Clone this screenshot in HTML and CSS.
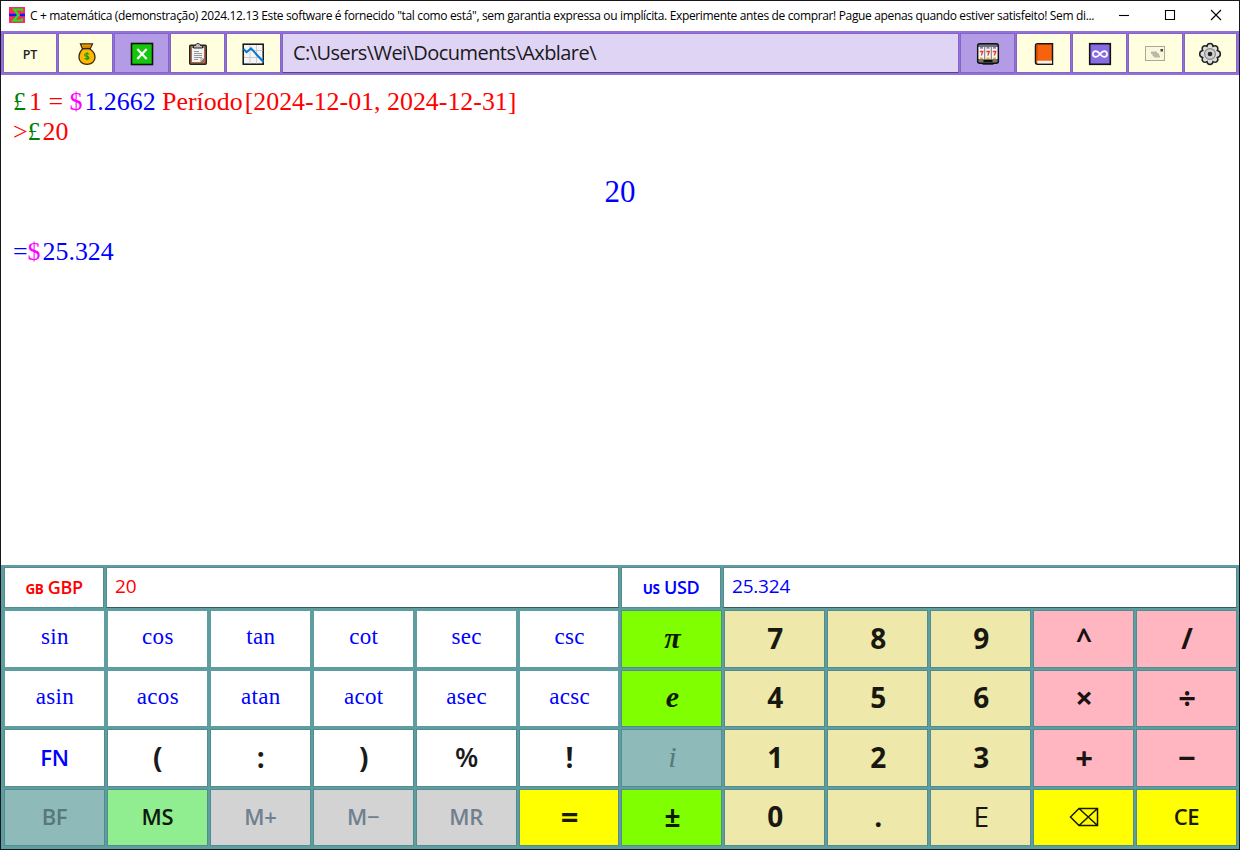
FILE: index.html
```html
<!DOCTYPE html>
<html lang="pt">
<head>
<meta charset="utf-8">
<title>C + matemática</title>
<link rel="stylesheet" href="styles.css">
</head>
<body>
<div class="window">
  <header class="titlebar">
    <svg class="logo" width="16" height="16" viewBox="0 0 16 16"><rect width="16" height="16" fill="#ff2860"/><path d="M0 6.800h6l3 1.200-3 1.200H0zM11 6.800h5v2.400h-5z" fill="#1414ff"/><path d="M13.200 4.500V2.500H5l4.500 5.500-5 5.500h8.500V11.500" fill="none" stroke="#14f014" stroke-width="2"/></svg>
    <span class="title">C + matemática (demonstração) 2024.12.13 Este software é fornecido "tal como está", sem garantia expressa ou implícita. Experimente antes de comprar! Pague apenas quando estiver satisfeito! Sem di...</span>
    <div class="controls">
      <svg width="12" height="12" viewBox="0 0 12 12"><path d="M1 6.500h10" /></svg>
      <svg width="12" height="12" viewBox="0 0 12 12"><path d="M1.500 1.500h9v9h-9z" /></svg>
      <svg width="12" height="12" viewBox="0 0 12 12"><path d="M1 1l10 10M11 1L1 11" /></svg>
    </div>
  </header>
  <nav class="toolbar">
    <button class="tool lang">PT</button>
    <button class="tool"><svg width="24" height="24" viewBox="0 0 24 24"><path d="M8.500 7L6.500 1.800h12L16 7c3 2 5 5 5 8.500 0 4-3.500 6.800-8 6.800s-8-2.800-8-6.800C5 12 6.500 9 8.500 7z" fill="#fdb900" stroke="#3a2b10" stroke-width="1.300"/><path d="M8 3.500h9L15.500 6h-6z" fill="#d88300"/><path d="M8.500 6.700h8" stroke="#222" stroke-width="1.300"/><path d="M15 12.300c-1.300-1.300-4.300-1-4.300.6 0 1.900 4.300.9 4.300 2.800 0 1.700-3 1.900-4.400.5M13 10.200v8" fill="none" stroke="#0d9d18" stroke-width="1.200"/></svg></button>
    <button class="tool active"><svg width="24" height="24" viewBox="0 0 24 24"><rect x="1.500" y="1.500" width="21" height="21" fill="#16c60c" stroke="#111" stroke-width="1.600"/><path d="M7.300 7l9.400 10M16.700 7L7.300 17" stroke="#fff" stroke-width="2.200"/></svg></button>
    <button class="tool"><svg width="24" height="24" viewBox="0 0 24 24"><rect x="3.700" y="3.200" width="16.600" height="19" rx="1" fill="#a46b4c" stroke="#222" stroke-width="1.400"/><path d="M6 6h12v10l-4 4H6z" fill="#f3f3f3"/><path d="M18 16l-4 4v-4z" fill="#c7c7c7"/><path d="M7.500 6V3.500h2C10 .8 14 .8 14.500 3.500h2V6z" fill="#bcbcbc" stroke="#222"/><path d="M8 9.500h5M8 11.500h8M8 13.500h8M8 15.500h8M8 17.500h4" stroke="#999"/></svg></button>
    <button class="tool"><svg width="24" height="24" viewBox="0 0 24 24"><rect x="1.200" y="2.200" width="20" height="20" fill="#f5f5f5" stroke="#111" stroke-width="1.500"/><path d="M2 8.500h18.500M2 15.500h18.500M8 3v18.500M14.500 3v18.500" stroke="#ccc"/><path d="M1.500 6.800l3 3.400L9 6.400 21.500 20" fill="none" stroke="#0078d7" stroke-width="2"/></svg></button>
    <div class="path">C:\Users\Wei\Documents\Axblare\</div>
    <button class="tool active"><svg width="24" height="24" viewBox="0 0 24 24"><path d="M6.500 19h11v3.700h-11z" fill="#111"/><rect x="1.700" y="1.700" width="20.600" height="19.600" rx="2" fill="#727272" stroke="#111" stroke-width="1.500"/><rect x="2.500" y="5" width="19" height="12" fill="#f5f5f5"/><path d="M8.700 5v12M15.300 5v12" stroke="#555" stroke-width=".8"/><path d="M4 5.800h3M10.500 5.800h3M17 5.800h3" stroke="#6050d0" stroke-width="1.300"/><path d="M4 16.300h3M10.500 16.300h3M17 16.300h3" stroke="#f2b400" stroke-width="1.500"/><path d="M3.800 9.500h3l-1.500 4M10.300 9.500h3l-1.500 4M16.800 9.500h3l-1.500 4" fill="none" stroke="#e8352a" stroke-width="1.300"/><path d="M7.500 18h9v2h-9z" fill="#111"/></svg></button>
    <button class="tool"><svg width="24" height="24" viewBox="0 0 24 24"><path d="M5.500 1.700h15v20.600h-15q-2 0-2-2V3.700q0-2 2-2z" fill="#f7630c" stroke="#181818" stroke-width="1.500"/><path d="M5 2.500v17" stroke="#c64a00" stroke-width="1.400"/><path d="M5 18.800h15v2.600H5.500z" fill="#f5f5f5"/></svg></button>
    <button class="tool"><svg width="24" height="24" viewBox="0 0 24 24"><rect x="1.700" y="1.700" width="20.600" height="20.600" fill="#886ce4" stroke="#111" stroke-width="1.600"/><path d="M12 12c-1.600-2-2.800-2.900-4.200-2.900a2.900 2.900 0 0 0 0 5.800C9.200 14.900 10.400 14 12 12s2.800-2.900 4.200-2.900a2.900 2.900 0 0 1 0 5.800C14.800 14.900 13.600 14 12 12z" fill="none" stroke="#fff" stroke-width="1.700"/></svg></button>
    <button class="tool"><svg width="24" height="24" viewBox="0 0 24 24"><rect x="1.500" y="4.500" width="19" height="14" fill="#f8f8dd" stroke="#aaa998"/><rect x="16.500" y="7" width="2.500" height="2.500" fill="#444"/><path d="M7 9.500h6v1.700h2v2.300h1v2h-6v-1.300H8.500V12H7z" fill="#b9b9a5"/></svg></button>
    <button class="tool last"><svg width="24" height="24" viewBox="0 0 24 24"><path d="M9 4.300q.3-2.800 3-2.800t3 2.800q2.400-1.400 4 .2t.3 4q3 .5 3 3.500t-3 3.500q1.300 2.400-.3 4t-4 .2q-.3 2.800-3 2.800t-3-2.800q-2.400 1.400-4-.2t-.3-4q-3-.5-3-3.500t3-3.500q-1.300-2.400.3-4t4-.2z" fill="#ddd" stroke="#222" stroke-width="1.500"/><circle cx="12" cy="12" r="5.400" fill="#cfcfcf" stroke="#888" stroke-width="1.200"/><circle cx="12" cy="12" r="2.300" fill="#222"/></svg></button>
  </nav>
  <main class="output">
    <p><span class="gbp">£</span><span class="one">1</span> = <span class="usd">$</span><span class="blue">1.2662</span> Período<span class="range">[2024-12-01, 2024-12-31]</span></p>
    <p>&gt;<span class="gbp">£</span>20</p>
    <p class="math">20</p>
    <p class="blue">=<span class="usd">$</span>25.324</p>
  </main>
  <section class="keypad">
    <div class="converter">
      <button class="currency red"><small>GB</small> GBP</button>
      <div class="amount red">20</div>
      <button class="currency blue"><small>US</small> USD</button>
      <div class="amount blue">25.324</div>
    </div>
    <div class="keys">
      <button class="key fn">sin</button><button class="key fn">cos</button><button class="key fn">tan</button><button class="key fn">cot</button><button class="key fn">sec</button><button class="key fn">csc</button><button class="key lime const"><span>π</span></button><button class="key num">7</button><button class="key num">8</button><button class="key num">9</button><button class="key op">^</button><button class="key op">/</button>
      <button class="key fn">asin</button><button class="key fn">acos</button><button class="key fn">atan</button><button class="key fn">acot</button><button class="key fn">asec</button><button class="key fn">acsc</button><button class="key lime const"><span>e</span></button><button class="key num">4</button><button class="key num">5</button><button class="key num">6</button><button class="key op sign">×</button><button class="key op sign">÷</button>
      <button class="key word blue">FN</button><button class="key">(</button><button class="key">:</button><button class="key">)</button><button class="key percent">%</button><button class="key">!</button><button class="key off const thin"><span>i</span></button><button class="key num">1</button><button class="key num">2</button><button class="key num">3</button><button class="key op sign">+</button><button class="key op sign">−</button>
      <button class="key word off">BF</button><button class="key word store">MS</button><button class="key word mem">M+</button><button class="key word mem">M−</button><button class="key word mem">MR</button><button class="key yellow sign">=</button><button class="key lime">±</button><button class="key num">0</button><button class="key num">.</button><button class="key num exp">E</button><button class="key yellow back"><svg width="30" height="20" viewBox="0 0 30 20"><path d="M1.500 10L10 1.500h18.500v17H10zM10 1.500l18.500 17M28.500 1.500L10 18.500" fill="none" stroke="#1a1a00" stroke-width="1.500"/></svg></button><button class="key word yellow">CE</button>
    </div>
  </section>
</div>
</body>
</html>
```
FILE: styles.css
```css
* { box-sizing: border-box; }
body { margin: 0; font-family: "Open Sans", "Noto Sans", sans-serif; }
button { margin: 0; padding: 0; font: inherit; color: inherit; border-radius: 0; }
p { margin: 0; }
.window { width: 1240px; height: 850px; border: 1px solid #18161a; background: #fff; display: flex; flex-direction: column; overflow: hidden; }
.titlebar { height: 30px; flex: none; display: flex; align-items: center; padding: 0 17px 2px 8px; }
.logo { flex: none; margin-right: 5px; }
.title { font-size: 12px; white-space: nowrap; letter-spacing: -0.35px; width: 1070px; color: #000; }
.controls { margin-left: auto; display: flex; gap: 34px; }
.controls svg { fill: none; stroke: #000; stroke-width: 1.1; }
.toolbar { height: 44px; flex: none; background: #9370db; padding: 2px 2px 1px 2px; display: flex; gap: 1px; }
.tool { width: 55px; height: 40px; flex: none; background: #ffffe0; border: 1px solid #8465c5; display: flex; align-items: center; justify-content: center; color: #222; padding-top: 1px; }
.tool.lang { width: 54px; font-size: 12.5px; font-weight: 600; padding-top: 3px; }
.tool.last { width: 53px; padding-right: 1px; }
.tool.active { background: #b39be5; }
.path { flex: 1; height: 40px; background: #dfd4f4; border: 1px solid #8465c5; border-bottom-color: #584383; padding-left: 10px; font-size: 20px; line-height: 38px; letter-spacing: -0.56px; color: #1b1920; white-space: nowrap; }
.output { flex: 1; padding: 12px; font-family: "Liberation Serif", serif; font-size: 25.900px; line-height: 30px; color: #f00; white-space: nowrap; }
.gbp { color: #008000; margin-right: 2px; }
.one { margin-left: 1px; }
.usd { color: #f0f; margin-right: 2px; }
.blue { color: #00f; }
.red { color: #f00; }
.range { margin-left: 2px; }
.math { height: 90px; line-height: 89px; font-size: 31px; text-align: center; color: #00f; }
.keypad { height: 284px; flex: none; background: #5f9ea0; padding: 2px 2px 3px 3px; }
.converter { display: grid; grid-template-columns: 100px 513px 100px 1fr; gap: 2px; height: 41px; margin-bottom: 2px; }
.currency { background: #fff; border: 1px solid #528c8e; font-size: 18px; font-weight: 600; letter-spacing: -0.4px; padding-bottom: 1px; }
.currency small { font-size: 13.500px; font-weight: 700; }
.amount { background: #fff; border: 1px solid #528c8e; border-bottom-color: #355b5d; padding-left: 8px; font-size: 19px; line-height: 37px; letter-spacing: -0.2px; }
.keys { display: grid; grid-template-columns: repeat(12, 1fr); grid-template-rows: repeat(4, 1fr); gap: 2px; height: 236px; }
.key { background: #fff; border: 1px solid #528c8e; font-size: 28px; font-weight: 700; line-height: 30px; color: #1a1a1a; display: flex; align-items: center; justify-content: center; padding: 0 0 2px 1px; }
.fn { font-family: "Liberation Serif", serif; font-weight: 400; font-size: 23px; letter-spacing: 0.3px; color: #00f; border-color: #5f9ea0; padding-bottom: 3px; }
.word { font-size: 22px; font-weight: 600; letter-spacing: -0.3px; padding: 0 0 2px; }
.key.blue { color: #00f; }
.const { font-family: "Liberation Serif", serif; font-style: italic; font-size: 30px; }
.thin { font-weight: 400; }
.lime { background: #7fff00; color: #0d1a00; }
.num { background: #eee8aa; color: #181711; }
.op { background: #ffb6c1; color: #1a1213; }
.sign { font-size: 31px; }
.percent { font-size: 27px; font-weight: 600; }
.off { background: #8fbaba; color: #587879; }
.store { background: #90ee90; color: #0e180e; }
.mem { background: #d3d3d3; color: #708090; }
.yellow { background: #ff0; color: #1a1a00; }
.back { padding: 0; }
.exp { font-weight: 500; }
```
